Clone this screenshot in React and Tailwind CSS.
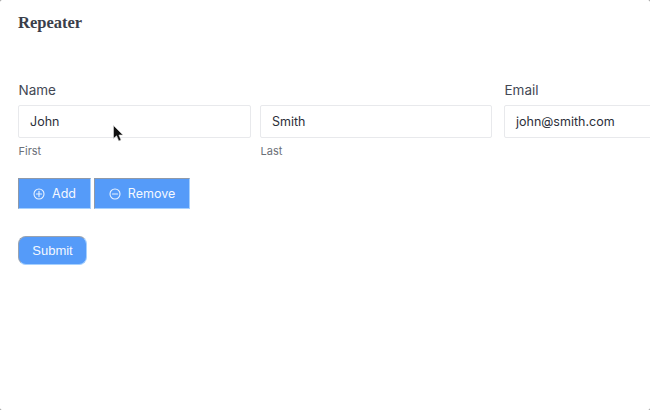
import React from "react";

function Field({ label, value, hint, width }) {
  return (
    <div className={`flex flex-col shrink-0 ${width}`}>
      <div className="h-[22px] mb-[4px] pl-[0.5px] text-[13.5px] leading-[22px] text-[#434854]">{label || "\u00a0"}</div>
      <div className="h-[33px] flex items-center border border-[#e8e9ec] rounded-[2px] bg-white pl-[11px] pt-[1px] text-[12.5px] text-[#2c303a]">{value}</div>
      {hint ? <div className="mt-[6px] h-[15px] pl-[0.5px] text-[11px] leading-[15px] text-[#6b7078]">{hint}</div> : null}
    </div>
  );
}

function CircleIcon({ plus }) {
  return (
    <svg width="12" height="12" viewBox="0 0 12 12" fill="none" stroke="#eaf3ff" strokeWidth="1.1" strokeLinecap="round">
      <circle cx="6" cy="6" r="5" />
      <path d="M3.4 6h5.2" />
      {plus ? <path d="M6 3.4v5.2" /> : null}
    </svg>
  );
}

function Action({ plus, label, width }) {
  return (
    <button className={`h-[31px] ${width} pt-[1px] flex items-center justify-center gap-[7px] bg-[#559bf9] border-l border-t border-l-[#8f99a8] border-t-[#8f99a8] border-r border-b border-r-[#a5d0ff] border-b-[#a5d0ff] text-[12.5px] text-[#f4f8ff]`}>
      <CircleIcon plus={plus} />
      <span>{label}</span>
    </button>
  );
}

export default function App() {
  return (
    <div className="w-[650px] h-[410px] bg-[#8a8a8a]">
      <div className="relative w-[650px] h-[410px] overflow-hidden rounded-[2px] bg-white font-['Inter',sans-serif]">
        <div className="pl-[18px] pt-[12px]">
          <h1 className="h-[22px] text-[16.5px] leading-[22px] font-bold text-[#3a3e4a] font-['Liberation_Serif',serif]">Repeater</h1>
          <div className="mt-[45px] flex w-[720px]">
            <Field label="Name" value="John" hint="First" width="w-[233px] mr-[9px]" />
            <Field value="Smith" hint="Last" width="w-[232px] mr-[12px]" />
            <Field label="Email" value="john@smith.com" width="w-[232px]" />
          </div>
          <div className="mt-[19px] flex gap-[3px]">
            <Action plus label="Add" width="w-[73px]" />
            <Action label="Remove" width="w-[96px]" />
          </div>
          <button className="block mt-[27px] w-[69px] h-[29px] rounded-[8px] bg-[#559bf9] border-l border-t border-l-[#9aa3b0] border-t-[#9aa3b0] border-r border-b border-r-[#a5d0ff] border-b-[#a5d0ff] text-[13px] text-[#f4f8ff] font-['Liberation_Sans',sans-serif]">Submit</button>
        </div>
        <svg className="absolute left-[113px] top-[125px]" width="11" height="18" viewBox="0 0 11 18">
          <path d="M0.5 0.5V13.5L3.6 10.8L5.8 16L8 15L5.9 10H10Z" fill="#111" stroke="#ddd" strokeWidth="0.6" />
        </svg>
      </div>
    </div>
  );
}
